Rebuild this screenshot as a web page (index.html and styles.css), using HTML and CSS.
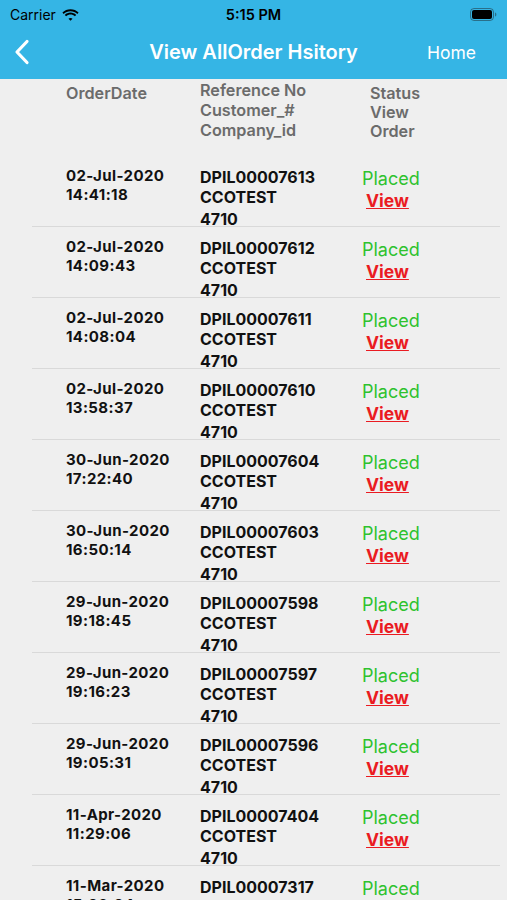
FILE: index.html
```html
<!DOCTYPE html>
<html lang="en">
<head>
    <meta charset="UTF-8">
    <meta name="viewport" content="width=device-width, initial-scale=1.0">
    <title>View AllOrder Hsitory</title>
    <link rel="stylesheet" href="styles.css">
</head>
<body>
    <div class="top-bar">
        <div class="status-bar">
            <div class="carrier">
                Carrier
                <svg class="wifi" width="17" height="12" viewBox="0 0 17 12">
                    <path d="M8.5 2.2c2.6 0 5 1 6.8 2.7l1.3-1.4C14.5 1.4 11.6 0.2 8.5 0.2S2.5 1.4 0.4 3.5l1.3 1.4C3.5 3.2 5.9 2.2 8.5 2.2z" fill="#000"/>
                    <path d="M8.5 5.6c1.7 0 3.2 0.6 4.4 1.7l1.3-1.4c-1.5-1.4-3.5-2.3-5.7-2.3S4.3 4.5 2.8 5.9l1.3 1.4C5.3 6.2 6.8 5.6 8.5 5.6z" fill="#000"/>
                    <path d="M8.5 8.9c0.8 0 1.5 0.3 2 0.8L8.5 11.8 6.5 9.7c0.5-0.5 1.2-0.8 2-0.8z" fill="#000"/>
                </svg>
            </div>
            <div class="clock">5:15 PM</div>
            <div class="battery">
                <svg width="27" height="13" viewBox="0 0 27 13">
                    <rect x="0.5" y="0.5" width="23" height="12" rx="3.5" fill="none" stroke="#1a1a1a" stroke-opacity="0.45"/>
                    <rect x="2" y="2" width="20" height="9" rx="2" fill="#000"/>
                    <path d="M25 4.5v4c0.8-0.3 1.4-1.1 1.4-2s-0.6-1.7-1.4-2z" fill="#1a1a1a" fill-opacity="0.45"/>
                </svg>
            </div>
        </div>
        <div class="nav-bar">
            <a href="#" class="back">
                <svg width="16" height="26" viewBox="0 0 16 26">
                    <path d="M13 2.5L3 13l10 10.5" fill="none" stroke="#fff" stroke-width="3.2" stroke-linecap="round" stroke-linejoin="round"/>
                </svg>
            </a>
            <div class="nav-title">View AllOrder Hsitory</div>
            <a href="#" class="nav-home">Home</a>
        </div>
    </div>

    <div class="list">
        <div class="list-head">
            <div class="head-date">OrderDate</div>
            <div class="head-ref">Reference No<br>Customer_#<br>Company_id</div>
            <div class="head-status">Status<br>View<br>Order</div>
        </div>

        <div class="order-row">
            <div class="col-date"><div>02-Jul-2020</div><div>14:41:18</div></div>
            <div class="col-ref"><div>DPIL00007613</div><div>CCOTEST</div><div class="company">4710</div></div>
            <div class="col-status"><div class="placed">Placed</div><a href="#" class="view-link">View</a></div>
        </div>
        <div class="order-row">
            <div class="col-date"><div>02-Jul-2020</div><div>14:09:43</div></div>
            <div class="col-ref"><div>DPIL00007612</div><div>CCOTEST</div><div class="company">4710</div></div>
            <div class="col-status"><div class="placed">Placed</div><a href="#" class="view-link">View</a></div>
        </div>
        <div class="order-row">
            <div class="col-date"><div>02-Jul-2020</div><div>14:08:04</div></div>
            <div class="col-ref"><div>DPIL00007611</div><div>CCOTEST</div><div class="company">4710</div></div>
            <div class="col-status"><div class="placed">Placed</div><a href="#" class="view-link">View</a></div>
        </div>
        <div class="order-row">
            <div class="col-date"><div>02-Jul-2020</div><div>13:58:37</div></div>
            <div class="col-ref"><div>DPIL00007610</div><div>CCOTEST</div><div class="company">4710</div></div>
            <div class="col-status"><div class="placed">Placed</div><a href="#" class="view-link">View</a></div>
        </div>
        <div class="order-row">
            <div class="col-date"><div>30-Jun-2020</div><div>17:22:40</div></div>
            <div class="col-ref"><div>DPIL00007604</div><div>CCOTEST</div><div class="company">4710</div></div>
            <div class="col-status"><div class="placed">Placed</div><a href="#" class="view-link">View</a></div>
        </div>
        <div class="order-row">
            <div class="col-date"><div>30-Jun-2020</div><div>16:50:14</div></div>
            <div class="col-ref"><div>DPIL00007603</div><div>CCOTEST</div><div class="company">4710</div></div>
            <div class="col-status"><div class="placed">Placed</div><a href="#" class="view-link">View</a></div>
        </div>
        <div class="order-row">
            <div class="col-date"><div>29-Jun-2020</div><div>19:18:45</div></div>
            <div class="col-ref"><div>DPIL00007598</div><div>CCOTEST</div><div class="company">4710</div></div>
            <div class="col-status"><div class="placed">Placed</div><a href="#" class="view-link">View</a></div>
        </div>
        <div class="order-row">
            <div class="col-date"><div>29-Jun-2020</div><div>19:16:23</div></div>
            <div class="col-ref"><div>DPIL00007597</div><div>CCOTEST</div><div class="company">4710</div></div>
            <div class="col-status"><div class="placed">Placed</div><a href="#" class="view-link">View</a></div>
        </div>
        <div class="order-row">
            <div class="col-date"><div>29-Jun-2020</div><div>19:05:31</div></div>
            <div class="col-ref"><div>DPIL00007596</div><div>CCOTEST</div><div class="company">4710</div></div>
            <div class="col-status"><div class="placed">Placed</div><a href="#" class="view-link">View</a></div>
        </div>
        <div class="order-row">
            <div class="col-date"><div>11-Apr-2020</div><div>11:29:06</div></div>
            <div class="col-ref"><div>DPIL00007404</div><div>CCOTEST</div><div class="company">4710</div></div>
            <div class="col-status"><div class="placed">Placed</div><a href="#" class="view-link">View</a></div>
        </div>
        <div class="order-row">
            <div class="col-date"><div>11-Mar-2020</div><div>15:20:24</div></div>
            <div class="col-ref"><div>DPIL00007317</div><div>CCOTEST</div><div class="company">4710</div></div>
            <div class="col-status"><div class="placed">Placed</div><a href="#" class="view-link">View</a></div>
        </div>
    </div>
</body>
</html>
```

FILE: styles.css
```css
body {
    margin: 0;
    padding: 0;
    height: 900px;
    overflow: hidden;
    background: #efefef;
    font-family: Inter, "Liberation Sans", Arial, sans-serif;
}
.top-bar {
    background: #35b5e5;
    height: 79px;
}
.status-bar {
    height: 29px;
    display: flex;
    align-items: center;
    justify-content: space-between;
    padding: 0 10px;
    position: relative;
}
.carrier {
    display: flex;
    align-items: center;
    gap: 6px;
    font-size: 14px;
    color: #000;
}
.clock {
    position: absolute;
    left: 0;
    right: 0;
    text-align: center;
    font-size: 14.5px;
    font-weight: 600;
    color: #000;
}
.battery {
    display: flex;
    align-items: center;
}
.nav-bar {
    height: 50px;
    display: flex;
    align-items: center;
    position: relative;
}
.back {
    display: flex;
    padding-left: 14px;
    margin-top: -4px;
}
.nav-title {
    position: absolute;
    left: 0;
    right: 0;
    text-align: center;
    font-size: 20px;
    font-weight: 600;
    color: #fff;
    margin-top: -4px;
    pointer-events: none;
}
.nav-home {
    margin-left: auto;
    margin-right: 31px;
    margin-top: -4px;
    font-size: 17.5px;
    color: #fff;
    text-decoration: none;
}
.list-head {
    display: flex;
    height: 77px;
    padding-left: 66px;
    color: #6b6b6b;
    font-weight: 600;
    font-size: 16.2px;
}
.head-date {
    width: 134px;
    margin-top: 5px;
    line-height: 19px;
}
.head-ref {
    width: 170px;
    margin-top: 1px;
    line-height: 20px;
}
.head-status {
    margin-top: 5px;
    line-height: 19px;
}
.order-row {
    display: flex;
    height: 71px;
    box-sizing: border-box;
    margin: 0 7px 0 32px;
    padding: 11px 0 0 34px;
    border-bottom: 1px solid #d9d9d9;
    font-weight: 700;
    color: #111;
}
.col-date {
    width: 134px;
    font-size: 15px;
    letter-spacing: 0.4px;
    line-height: 18.5px;
}
.col-ref {
    width: 162px;
    font-size: 16px;
    line-height: 20px;
}
.company {
    margin-top: 2px;
}
.col-status {
    margin-top: 1px;
    line-height: 22px;
    font-size: 18px;
}
.placed {
    color: #2ec22e;
    font-weight: 400;
}
.view-link {
    display: inline-block;
    margin-left: 4px;
    color: #ea1b22;
    font-weight: 700;
    font-size: 17.5px;
    text-decoration: underline;
}
```
